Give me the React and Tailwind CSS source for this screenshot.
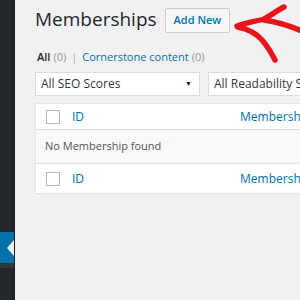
import React from 'react'

const font = { fontFamily: '"Open Sans", "Noto Sans", Arial, sans-serif' }

function Checkbox() {
  return <span className="block w-[14px] h-[14px] border border-[#b4b9be] bg-white shrink-0" />
}

function Row({ children, className = '' }) {
  return <div className={`flex items-center ${className}`}>{children}</div>
}

export default function App() {
  return (
    <div className="relative flex w-[300px] h-[300px] overflow-hidden bg-[#f1f1f1]" style={font}>
      <div className="w-[15px] shrink-0 flex flex-col bg-[#23282d] border-r border-[#1b1f23]">
        <div className="h-[232px]" />
        <div className="relative h-[31px] bg-[#0073aa]">
          <span className="absolute right-0 top-[8px] w-0 h-0 border-y-[8px] border-y-transparent border-r-[7px] border-r-[#f1f1f1]" />
        </div>
        <div className="h-[5px] bg-[#32373c]" />
      </div>

      <div className="flex-1 min-w-0 pl-[20px] pt-[8px] flex flex-col">
        <Row className="h-[25px] gap-[8px]">
          <h1 className="text-[19px] leading-none text-[#23282d] font-normal whitespace-nowrap -mt-[2px]">Memberships</h1>
          <span className="h-[25px] px-[8px] flex items-center border border-[#ccc] bg-[#f7f7f7] rounded-[2px] text-[11px] font-semibold text-[#0073aa] whitespace-nowrap">
            Add New
          </span>
        </Row>

        <div className="mt-[15px] h-[18px] flex items-center text-[11px] whitespace-nowrap text-[#666] pl-[2px]">
          <span className="font-semibold text-[#23282d]">All</span>
          <span className="ml-[3px] text-[#999]">(0)</span>
          <span className="mx-[5px] text-[#aaa]">|</span>
          <span className="text-[#0073aa]">Cornerstone content</span>
          <span className="ml-[3px] text-[#999]">(0)</span>
        </div>

        <div className="mt-[6px] flex gap-[8px] whitespace-nowrap">
          <div className="w-[165px] h-[24px] shrink-0 bg-white border border-[#ddd] flex items-center justify-between pl-[5px] pr-[7px] text-[12px] text-[#32373c]">
            <span>All SEO Scores</span>
            <span className="text-[7px] text-[#222]">▼</span>
          </div>
          <div className="w-[120px] h-[24px] shrink-0 bg-white border border-[#ddd] flex items-center pl-[5px] text-[12px] text-[#32373c] overflow-hidden">
            <span>All Readability Scores</span>
          </div>
        </div>

        <div className="mt-[7px] mr-[-2px] bg-white border border-[#e5e5e5] flex flex-col text-[12px] whitespace-nowrap overflow-hidden">
          <Row className="h-[26px] pl-[10px] border-b border-[#e1e1e1]">
            <Checkbox />
            <span className="ml-[12px] text-[#0073aa]">ID</span>
            <span className="ml-[156px] text-[#0073aa]">Memberships</span>
          </Row>
          <Row className="h-[33px] pl-[9px] bg-[#f9f9f9] text-[11px] text-[#555]">
            No Membership found
          </Row>
          <Row className="h-[30px] pl-[10px] border-t border-[#e1e1e1]">
            <Checkbox />
            <span className="ml-[12px] text-[#0073aa]">ID</span>
            <span className="ml-[156px] text-[#0073aa]">Memberships</span>
          </Row>
        </div>
      </div>

      <svg className="absolute left-0 top-0 pointer-events-none" width="300" height="300" viewBox="0 0 300 300">
        <g fill="none" stroke="#e8141b" strokeWidth="5.5" strokeLinecap="round" strokeLinejoin="round">
          <path d="M237 26 C248 22 258 21 264 19 C270 16 276 11 284 7" />
          <path d="M238 27 C248 29 256 33 262 40 C268 47 272 54 275 60" />
          <path d="M264 20 C278 22 290 26 302 31" />
        </g>
      </svg>
    </div>
  )
}
